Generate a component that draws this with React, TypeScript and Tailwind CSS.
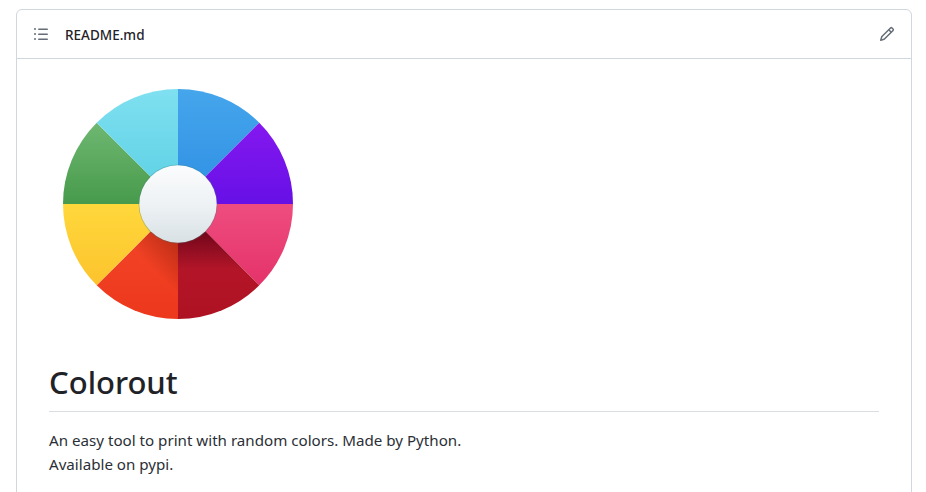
const wedges = [
  { id: "blue", d: "M130 130 L130 15 A115 115 0 0 1 211.3 48.7 Z" },
  { id: "purple", d: "M130 130 L211.3 48.7 A115 115 0 0 1 245 130 Z" },
  { id: "pink", d: "M130 130 L245 130 A115 115 0 0 1 211.3 211.3 Z" },
  { id: "crimson", d: "M130 130 L211.3 211.3 A115 115 0 0 1 130 245 Z" },
  { id: "orange", d: "M130 130 L130 245 A115 115 0 0 1 48.7 211.3 Z" },
  { id: "yellow", d: "M130 130 L48.7 211.3 A115 115 0 0 1 15 130 Z" },
  { id: "green", d: "M130 130 L15 130 A115 115 0 0 1 48.7 48.7 Z" },
  { id: "cyan", d: "M130 130 L48.7 48.7 A115 115 0 0 1 130 15 Z" },
];

const stops: Record<string, [string, string, number, number]> = {
  blue: ["#45a6ec", "#2e8ee4", 15, 130],
  purple: ["#8518f0", "#6610e6", 48, 130],
  pink: ["#ef4d7f", "#e4336a", 130, 211],
  crimson: ["#bb1a30", "#ae1222", 130, 245],
  orange: ["#f5482a", "#ec381c", 130, 245],
  yellow: ["#ffd83c", "#fcc32d", 130, 211],
  green: ["#6fb872", "#479a4b", 48, 130],
  cyan: ["#7fe0f0", "#59cfe3", 15, 130],
};

function Wheel() {
  return (
    <svg width="260" height="260" viewBox="0 0 260 260" className="block -ml-px">
      <defs>
        {Object.entries(stops).map(([k, [a, b, y1, y2]]) => (
          <linearGradient key={k} id={`g-${k}`} gradientUnits="userSpaceOnUse" x1="0" y1={y1} x2="0" y2={y2}>
            <stop offset="0" stopColor={a} />
            <stop offset="1" stopColor={b} />
          </linearGradient>
        ))}
        <linearGradient id="hub" x1="0" y1="0" x2="0" y2="1">
          <stop offset="0" stopColor="#fbfcfd" />
          <stop offset="0.5" stopColor="#eef2f4" />
          <stop offset="1" stopColor="#d8e1e5" />
        </linearGradient>
        <linearGradient id="shadeCrimson" gradientUnits="userSpaceOnUse" x1="130" y1="160" x2="130" y2="196">
          <stop offset="0" stopColor="#6a0418" stopOpacity="0.85" />
          <stop offset="1" stopColor="#6a0418" stopOpacity="0" />
        </linearGradient>
        <linearGradient id="shadeOrange" gradientUnits="userSpaceOnUse" x1="130" y1="160" x2="100" y2="190">
          <stop offset="0" stopColor="#8a1a08" stopOpacity="0.6" />
          <stop offset="1" stopColor="#8a1a08" stopOpacity="0" />
        </linearGradient>
      </defs>
      {wedges.map((w) => (
        <path key={w.id} d={w.d} fill={`url(#g-${w.id})`} />
      ))}
      <path d="M130 130 L211.3 211.3 A115 115 0 0 1 130 245 Z" fill="url(#shadeCrimson)" />
      <path d="M130 130 L130 245 A115 115 0 0 1 48.7 211.3 Z" fill="url(#shadeOrange)" />
      <circle cx="130" cy="130" r="39.5" fill="#3d7f78" fillOpacity="0.35" />
      <circle cx="130" cy="130" r="38.7" fill="url(#hub)" />
    </svg>
  );
}

export default function App() {
  return (
    <div className="h-[492px] overflow-hidden bg-white px-4 pt-[9px] font-['Noto_Sans','Open_Sans',sans-serif] text-[#1f2328]">
      <div className="h-[520px] w-[896px] rounded-md border border-[#d0d7de]">
        <div className="flex h-[49px] items-center justify-between border-b border-[#d0d7de] pl-4 pr-4">
          <div className="flex items-center gap-4">
            <svg width="16" height="16" viewBox="0 0 16 16" fill="#656d76">
              <path d="M5.75 2.5h8.5a.75.75 0 0 1 0 1.5h-8.5a.75.75 0 0 1 0-1.5Zm0 5h8.5a.75.75 0 0 1 0 1.5h-8.5a.75.75 0 0 1 0-1.5Zm0 5h8.5a.75.75 0 0 1 0 1.5h-8.5a.75.75 0 0 1 0-1.5ZM2 14a1 1 0 1 1 0-2 1 1 0 0 1 0 2Zm1-6a1 1 0 1 1-2 0 1 1 0 0 1 2 0ZM2 4a1 1 0 1 1 0-2 1 1 0 0 1 0 2Z" />
            </svg>
            <span className="pt-0.5 text-[13.5px] font-medium leading-5">README.md</span>
          </div>
          <svg width="16" height="16" viewBox="0 0 16 16" fill="#656d76">
            <path d="M11.013 1.427a1.75 1.75 0 0 1 2.474 0l1.086 1.086a1.75 1.75 0 0 1 0 2.474l-8.61 8.61c-.21.21-.47.364-.756.445l-3.251.93a.75.75 0 0 1-.927-.928l.929-3.25c.081-.286.235-.547.445-.758l8.61-8.61Zm.176 4.823L9.75 4.81l-6.286 6.287a.253.253 0 0 0-.064.108l-.558 1.953 1.953-.558a.253.253 0 0 0 .108-.064Zm1.238-3.763a.25.25 0 0 0-.354 0L10.811 3.75l1.439 1.44 1.263-1.263a.25.25 0 0 0 0-.354Z" />
          </svg>
        </div>
        <div className="px-8 pt-[15px]">
          <Wheel />
          <h1 className="mt-[28px] border-b border-[#d8dee4] pb-[9px] text-[31px] font-medium leading-[40px]">Colorout</h1>
          <p className="mt-4 text-[15.15px] leading-6 text-[#2b3036]">
            An easy tool to print with random colors. Made by Python.
            <br />
            Available on pypi.
          </p>
        </div>
      </div>
    </div>
  );
}
